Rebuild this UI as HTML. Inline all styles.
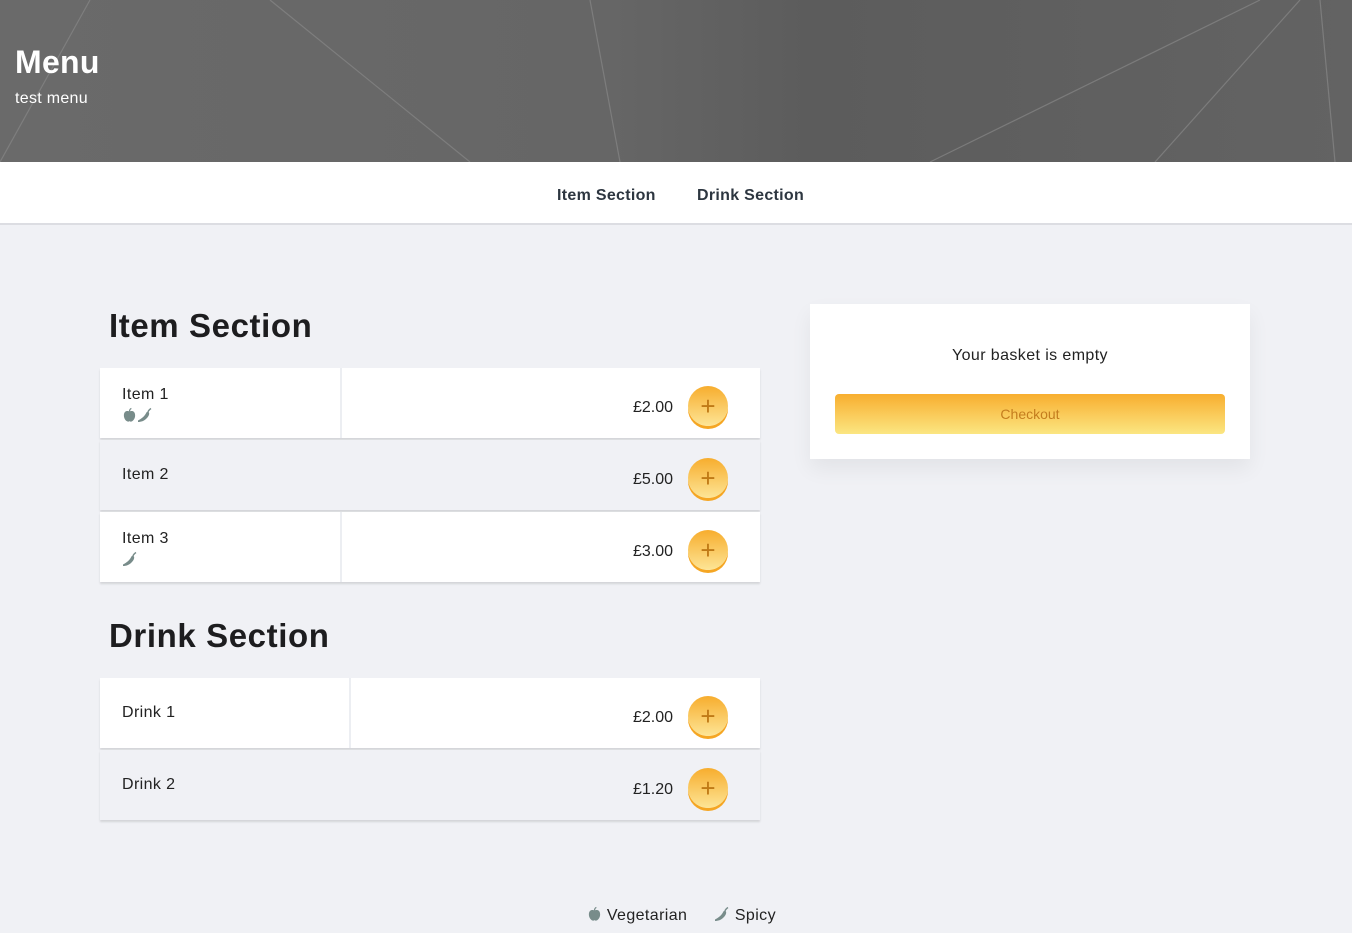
<!DOCTYPE html>
<html><head><meta charset="utf-8"><style>
*{margin:0;padding:0;box-sizing:border-box}
body{width:1352px;height:933px;background:#f0f1f5;font-family:"Liberation Sans",sans-serif;position:relative;overflow:hidden;color:#222}
.hdr{position:absolute;left:0;top:0;width:1352px;height:162px;background:linear-gradient(90deg,#6a6a6a 0%,#666 45%,#5c5c5c 60%,#636363 100%);overflow:hidden}
.hdr h1{position:absolute;left:15px;top:44px;color:#fff;font-size:32px;font-weight:bold;letter-spacing:0.3px}
.hdr p{position:absolute;left:15px;top:90px;color:#fff;font-size:16px;letter-spacing:0.3px}
.nav{position:absolute;left:0;top:162px;width:1352px;height:63px;background:#fff;border-bottom:2px solid #dcdde2}
.nav span{position:absolute;top:25px;font-size:16px;font-weight:bold;color:#2d3640;letter-spacing:0.3px}
h2{position:absolute;left:109px;font-size:33px;font-weight:bold;color:#1d1d1f;letter-spacing:0.6px}
.row{position:absolute;left:100px;width:660px;height:70px;background:#fff;box-shadow:0 2px 2px rgba(0,0,0,.12)}
.row.g{background:#f0f1f5}
.row .div{position:absolute;top:0;bottom:0;width:2px;background:#eceef2}
.row .n{position:absolute;left:22px;font-size:16px;color:#222;letter-spacing:0.4px}
.row .p{position:absolute;right:87px;top:30px;font-size:16px;color:#222}
.btn{position:absolute;right:32px;top:18px;width:40px;height:40px;border-radius:50%;background:linear-gradient(#f7ad2e,#fde596);box-shadow:0 3px 0 #f5a623;color:#c07a16;font-size:26px;text-align:center;line-height:40px}
.ic{position:absolute;left:22px}
.basket{position:absolute;left:810px;top:304px;width:440px;height:155px;background:#fff;box-shadow:0 10px 20px rgba(0,0,0,.06)}
.basket p{position:absolute;top:43px;width:100%;text-align:center;font-size:16px;color:#222;letter-spacing:0.4px}
.co{position:absolute;left:25px;top:90px;width:390px;height:40px;border-radius:4px;background:linear-gradient(#f8ae2f,#fbe682);color:#c47d1e;font-size:14px;text-align:center;line-height:40px}
.leg{position:absolute;top:906px;font-size:16px;color:#222;letter-spacing:0.4px}
.leg svg{vertical-align:-2px}
</style></head><body>
<svg width="0" height="0" style="position:absolute">
<defs>
<symbol id="ap" viewBox="0 0 16 16"><path d="M8 4.5C6 3 2 3.5 2 8.5c0 3.5 2.5 6.5 4.5 6.5 0.8 0 1-.4 1.5-.4s0.7.4 1.5.4c2 0 4.5-3 4.5-6.5C14 3.5 10 3 8 4.5z" fill="#788c8a"/><path d="M8 4.5C8 3 8.5 1.5 10 1" stroke="#788c8a" stroke-width="1.3" fill="none"/></symbol>
<symbol id="ch" viewBox="0 0 16 16"><path d="M1 15c3 0 6-1 8.5-3.5S12.5 7 12 5.5c-.6-.8-2-.9-2.6 0C8.6 7 7.5 10 1 13.5z" fill="#788c8a"/><path d="M11 5c.3-1.5 1.5-2.5 3-3.5" stroke="#788c8a" stroke-width="1.4" fill="none"/></symbol>
</defs></svg>
<div class="hdr">
<svg width="1352" height="162" style="position:absolute;left:0;top:0">
<g stroke="#888" stroke-width="1.2" fill="none" opacity=".7">
<line x1="90" y1="0" x2="0" y2="162"/>
<line x1="270" y1="0" x2="470" y2="162"/>
<line x1="590" y1="0" x2="620" y2="162"/>
<line x1="1260" y1="0" x2="930" y2="162"/>
<line x1="1300" y1="0" x2="1155" y2="162"/>
<line x1="1320" y1="0" x2="1335" y2="162"/>
</g></svg>
<h1>Menu</h1><p>test menu</p></div>
<div class="nav"><span style="left:557px">Item Section</span><span style="left:697px">Drink Section</span></div>

<h2 style="top:307px">Item Section</h2>
<div class="row" style="top:368px"><div class="div" style="left:240px"></div><div class="n" style="top:18px">Item 1</div><div class="ic" style="top:39px"><svg width="15" height="16"><use href="#ap"/></svg><svg width="16" height="16"><use href="#ch"/></svg></div><div class="p" style="top:31px">£2.00</div><div class="btn">+</div></div>
<div class="row g" style="top:440px"><div class="n" style="top:26px">Item 2</div><div class="p" style="top:31px">£5.00</div><div class="btn">+</div></div>
<div class="row" style="top:512px"><div class="div" style="left:240px"></div><div class="n" style="top:18px">Item 3</div><div class="ic" style="top:39px"><svg width="16" height="16"><use href="#ch"/></svg></div><div class="p" style="top:31px">£3.00</div><div class="btn">+</div></div>

<h2 style="top:617px">Drink Section</h2>
<div class="row" style="top:678px"><div class="div" style="left:249px"></div><div class="n" style="top:26px">Drink 1</div><div class="p" style="top:31px">£2.00</div><div class="btn">+</div></div>
<div class="row g" style="top:750px"><div class="n" style="top:26px">Drink 2</div><div class="p" style="top:31px">£1.20</div><div class="btn">+</div></div>

<div class="basket"><p>Your basket is empty</p><div class="co">Checkout</div></div>

<div class="leg" style="left:587px"><svg width="15" height="16"><use href="#ap"/></svg> Vegetarian</div>
<div class="leg" style="left:714px"><svg width="16" height="16"><use href="#ch"/></svg> Spicy</div>
</body></html>
